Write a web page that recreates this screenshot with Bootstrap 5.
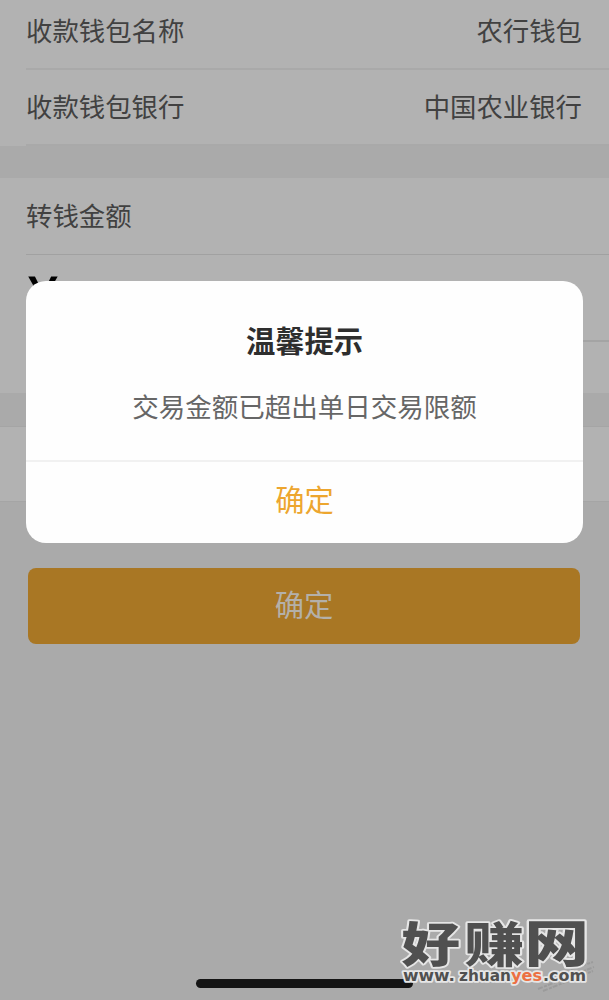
<!DOCTYPE html>
<html lang="zh-CN">
<head>
<meta charset="utf-8">
<meta name="viewport" content="width=device-width, initial-scale=1">
<title>转钱</title>
<link href="https://cdn.jsdelivr.net/npm/bootstrap@5.3.0/dist/css/bootstrap.min.css" rel="stylesheet">
<style>
body{font-family:"Noto Sans CJK SC",sans-serif;background:#aaa;color:#414141;font-size:26.4px;line-height:38px;height:1000px;overflow:hidden}
.sheet{background:#b2b2b2}
.line-row{margin-left:26px;padding-right:27px;border-bottom:2px solid #a9a9a9}
.row-a{height:70px;padding-bottom:8px}
.row-b{height:76px;padding-bottom:2px}
.row-c{height:77px;border-bottom:1px solid #a1a1a1;padding-bottom:2px}
.sheet-amount{margin-top:32px;height:215px}
.amount{height:87px;margin-left:26px;border-bottom:2px solid #a4a4a4;color:#000;font:500 50px/48px "Noto Sans CJK SC",sans-serif;padding:11px 0 0 1px}
.amount span{display:inline-block;transform:scaleX(1.12);transform-origin:left}
.sheet-note{margin-top:33px;height:76px;border-top:1px solid #a5a5a5;border-bottom:1px solid #a5a5a5}
.pay{margin:66px 29px 0 28px;height:76px;border-radius:8px;background:#a97724;color:#b4b0a9;font-size:29.3px;width:552px;padding:0 0 4px}
.dialog{left:26px;top:281px;width:557px;height:262px;border-radius:20px;background:#fefefe}
.dialog-title{font-size:29.3px;font-weight:700;color:#2e2e2e;padding-top:38px;line-height:40px}
.dialog-text{color:#666;padding-top:28px;height:103px;font-size:26.5px;border-bottom:2px solid #f1f1f1}
.dialog-ok{color:#eda62f;font-size:29.3px;height:80px;padding-bottom:8px}
.home-bar{left:196px;top:979px;width:217px;height:9px;background:#151515}
.watermark{left:390px;top:910px;overflow:visible}
</style>
</head>
<body class="position-relative">
<main>
  <section class="sheet">
    <div class="line-row row-a d-flex justify-content-between align-items-center"><span>收款钱包名称</span><span>农行钱包</span></div>
    <div class="line-row row-b d-flex justify-content-between align-items-center"><span>收款钱包银行</span><span>中国农业银行</span></div>
  </section>
  <section class="sheet sheet-amount">
    <div class="line-row row-c d-flex align-items-center">转钱金额</div>
    <div class="amount"><span>¥</span></div>
  </section>
  <section class="sheet sheet-note"></section>
  <button class="pay btn border-0 d-flex justify-content-center align-items-center" type="button">确定</button>
</main>
<div class="home-bar position-absolute rounded-pill"></div>
<div class="dialog position-absolute text-center overflow-hidden" role="dialog">
  <div class="dialog-title">温馨提示</div>
  <div class="dialog-text">交易金额已超出单日交易限额</div>
  <div class="dialog-ok d-flex justify-content-center align-items-center">确定</div>
</div>
<svg class="watermark position-absolute" width="219" height="90" viewBox="0 0 219 90" aria-label="好赚网">
  <g fill="none" stroke="#9b9b9b" stroke-width="2" stroke-dasharray="5 1.5 3 1"><path d="M148 79l56-22M153 81l50-20M181 59l22-7"/></g>
  <g paint-order="stroke" stroke="#e6e6e6" stroke-linejoin="round" fill="#505050">
    <g font-family="Noto Sans CJK SC, sans-serif" font-weight="900" font-size="58" stroke-width="4.2">
      <text transform="translate(11.5 51.5) scale(1.01 .82)">好</text>
      <text transform="translate(74.5 51.5) scale(1.03 .82)">赚</text>
      <text transform="translate(134.5 51.5) scale(1.11 .86)">网</text>
    </g>
    <g font-family="DejaVu Sans, sans-serif" font-weight="700" font-size="15" stroke-width="3.5">
      <text x="13" y="71" textLength="52" lengthAdjust="spacingAndGlyphs">www.</text>
      <text x="69" y="71" textLength="52" lengthAdjust="spacingAndGlyphs">zhuan</text>
      <text x="121" y="71" textLength="31" lengthAdjust="spacingAndGlyphs" fill="#ec7042">yes</text>
      <text x="153" y="71" textLength="43" lengthAdjust="spacingAndGlyphs">.com</text>
    </g>
  </g>
</svg>
<script src="https://cdn.jsdelivr.net/npm/bootstrap@5.3.0/dist/js/bootstrap.bundle.min.js"></script>
</body>
</html>
